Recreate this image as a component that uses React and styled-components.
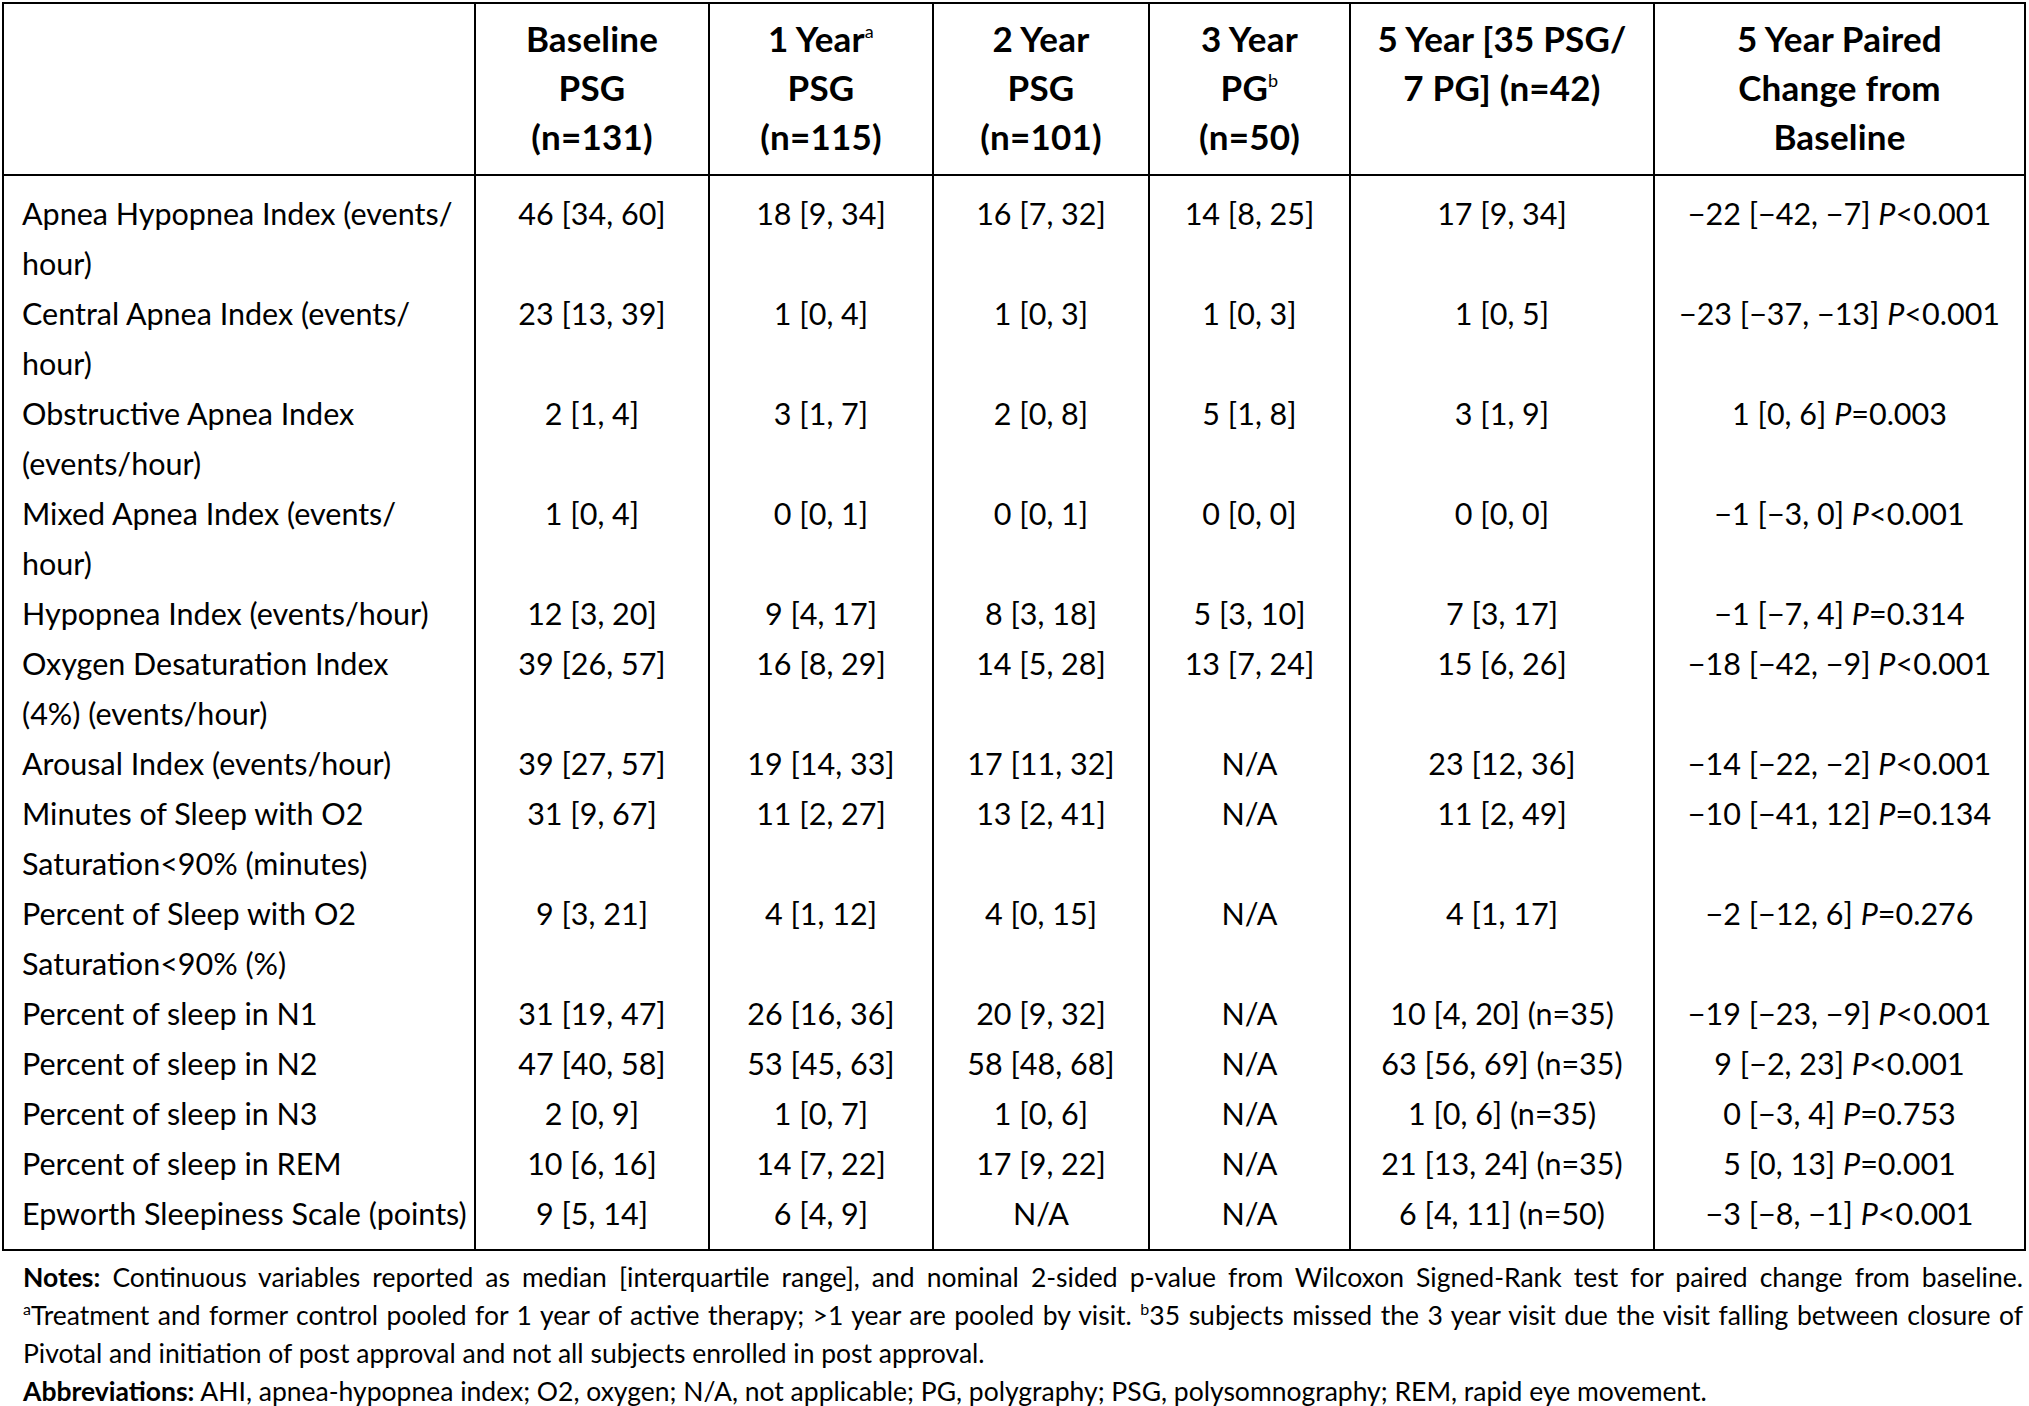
import React from "react";
import styled, { createGlobalStyle } from "styled-components";

const GlobalStyle = createGlobalStyle`
  html, body { margin: 0; padding: 0; background: #fff; }
  body {
    font-family: Lato, "Open Sans", "Liberation Sans", sans-serif;
    color: #000;
  }
`;

const Page = styled.div`
  width: 2029px;
  padding: 2px 0 0 2px;
  box-sizing: border-box;
`;

const Table = styled.table`
  border-collapse: collapse;
  table-layout: fixed;
  width: 2024px;
  border: 2px solid #000;
`;

const HeadCell = styled.th`
  border-left: 2px solid #000;
  border-bottom: 2px solid #000;
  padding: 10px 4px 13px;
  font-size: 35px;
  line-height: 49px;
  font-weight: 700;
  letter-spacing: 0.2px;
  text-align: center;
  vertical-align: top;
  white-space: nowrap;
`;

const Cell = styled.td`
  border-left: 2px solid #000;
  padding: ${(p) => (p.$first ? "12px" : "0")} 6px ${(p) => (p.$last ? "11px" : "0")};
  padding-left: ${(p) => (p.$label ? "18px" : "6px")};
  font-size: 30.5px;
  line-height: 50px;
  text-align: ${(p) => (p.$label ? "left" : "center")};
  vertical-align: top;
  white-space: nowrap;
`;

const Sup = styled.sup`
  font-size: 18px;
  line-height: 0;
  vertical-align: 14px;
  font-weight: 400;
`;

const Notes = styled.div`
  padding: 7px 6px 0 21px;
  font-size: 26.5px;
  line-height: 38px;
`;

const NoteLine = styled.div`
  text-align: ${(p) => (p.$justify ? "justify" : "left")};
  text-align-last: ${(p) => (p.$justify ? "justify" : "left")};
  white-space: ${(p) => (p.$justify ? "normal" : "nowrap")};
`;

const AbbrevLine = styled.div`
  margin-top: 3px;
  line-height: 32px;
  white-space: nowrap;
`;

const NoteSup = styled.sup`
  font-size: 16px;
  line-height: 0;
  vertical-align: 10px;
`;

const colWidths = [472, 234, 224, 216, 201, 304, 371];

const headers = [
  [],
  ["Baseline", "PSG", "(n=131)"],
  [<>1 Year<Sup>a</Sup></>, "PSG", "(n=115)"],
  ["2 Year", "PSG", "(n=101)"],
  ["3 Year", <>PG<Sup>b</Sup></>, "(n=50)"],
  ["5 Year [35 PSG/", "7 PG] (n=42)"],
  ["5 Year Paired", "Change from", "Baseline"],
];

const rows = [
  [["Apnea Hypopnea Index (events/", "hour)"], "46 [34, 60]", "18 [9, 34]", "16 [7, 32]", "14 [8, 25]", "17 [9, 34]", ["−22 [−42, −7]", "<0.001"]],
  [["Central Apnea Index (events/", "hour)"], "23 [13, 39]", "1 [0, 4]", "1 [0, 3]", "1 [0, 3]", "1 [0, 5]", ["−23 [−37, −13]", "<0.001"]],
  [["Obstructive Apnea Index", "(events/hour)"], "2 [1, 4]", "3 [1, 7]", "2 [0, 8]", "5 [1, 8]", "3 [1, 9]", ["1 [0, 6]", "=0.003"]],
  [["Mixed Apnea Index (events/", "hour)"], "1 [0, 4]", "0 [0, 1]", "0 [0, 1]", "0 [0, 0]", "0 [0, 0]", ["−1 [−3, 0]", "<0.001"]],
  [["Hypopnea Index (events/hour)"], "12 [3, 20]", "9 [4, 17]", "8 [3, 18]", "5 [3, 10]", "7 [3, 17]", ["−1 [−7, 4]", "=0.314"]],
  [["Oxygen Desaturation Index", "(4%) (events/hour)"], "39 [26, 57]", "16 [8, 29]", "14 [5, 28]", "13 [7, 24]", "15 [6, 26]", ["−18 [−42, −9]", "<0.001"]],
  [["Arousal Index (events/hour)"], "39 [27, 57]", "19 [14, 33]", "17 [11, 32]", "N/A", "23 [12, 36]", ["−14 [−22, −2]", "<0.001"]],
  [["Minutes of Sleep with O2", "Saturation<90% (minutes)"], "31 [9, 67]", "11 [2, 27]", "13 [2, 41]", "N/A", "11 [2, 49]", ["−10 [−41, 12]", "=0.134"]],
  [["Percent of Sleep with O2", "Saturation<90% (%)"], "9 [3, 21]", "4 [1, 12]", "4 [0, 15]", "N/A", "4 [1, 17]", ["−2 [−12, 6]", "=0.276"]],
  [["Percent of sleep in N1"], "31 [19, 47]", "26 [16, 36]", "20 [9, 32]", "N/A", "10 [4, 20] (n=35)", ["−19 [−23, −9]", "<0.001"]],
  [["Percent of sleep in N2"], "47 [40, 58]", "53 [45, 63]", "58 [48, 68]", "N/A", "63 [56, 69] (n=35)", ["9 [−2, 23]", "<0.001"]],
  [["Percent of sleep in N3"], "2 [0, 9]", "1 [0, 7]", "1 [0, 6]", "N/A", "1 [0, 6] (n=35)", ["0 [−3, 4]", "=0.753"]],
  [["Percent of sleep in REM"], "10 [6, 16]", "14 [7, 22]", "17 [9, 22]", "N/A", "21 [13, 24] (n=35)", ["5 [0, 13]", "=0.001"]],
  [["Epworth Sleepiness Scale (points)"], "9 [5, 14]", "6 [4, 9]", "N/A", "N/A", "6 [4, 11] (n=50)", ["−3 [−8, −1]", "<0.001"]],
];

function Lines({ items }) {
  return items.map((t, i) => (
    <React.Fragment key={i}>
      {i > 0 && <br />}
      {t}
    </React.Fragment>
  ));
}

export default function App() {
  return (
    <>
      <GlobalStyle />
      <Page>
        <Table>
          <colgroup>
            {colWidths.map((w, i) => (
              <col key={i} style={{ width: w }} />
            ))}
          </colgroup>
          <thead>
            <tr>
              {headers.map((h, i) => (
                <HeadCell key={i}>
                  <Lines items={h} />
                </HeadCell>
              ))}
            </tr>
          </thead>
          <tbody>
            {rows.map((r, ri) => {
              const first = ri === 0;
              const last = ri === rows.length - 1;
              return (
                <tr key={ri}>
                  <Cell $label $first={first} $last={last}>
                    <Lines items={r[0]} />
                  </Cell>
                  {r.slice(1, 6).map((v, ci) => (
                    <Cell key={ci} $first={first} $last={last}>
                      {v}
                    </Cell>
                  ))}
                  <Cell $first={first} $last={last}>
                    {r[6][0]} <i>P</i>
                    {r[6][1]}
                  </Cell>
                </tr>
              );
            })}
          </tbody>
        </Table>
        <Notes>
          <NoteLine $justify>
            <b>Notes:</b> Continuous variables reported as median [interquartile range], and nominal 2-sided p-value from Wilcoxon Signed-Rank test for paired change from baseline.
          </NoteLine>
          <NoteLine $justify>
            <NoteSup>a</NoteSup>Treatment and former control pooled for 1 year of active therapy; &gt;1 year are pooled by visit. <NoteSup>b</NoteSup>35 subjects missed the 3 year visit due the visit falling between closure of
          </NoteLine>
          <NoteLine>
            Pivotal and initiation of post approval and not all subjects enrolled in post approval.
          </NoteLine>
          <AbbrevLine>
            <b>Abbreviations:</b> AHI, apnea-hypopnea index; O2, oxygen; N/A, not applicable; PG, polygraphy; PSG, polysomnography; REM, rapid eye movement.
          </AbbrevLine>
        </Notes>
      </Page>
    </>
  );
}
